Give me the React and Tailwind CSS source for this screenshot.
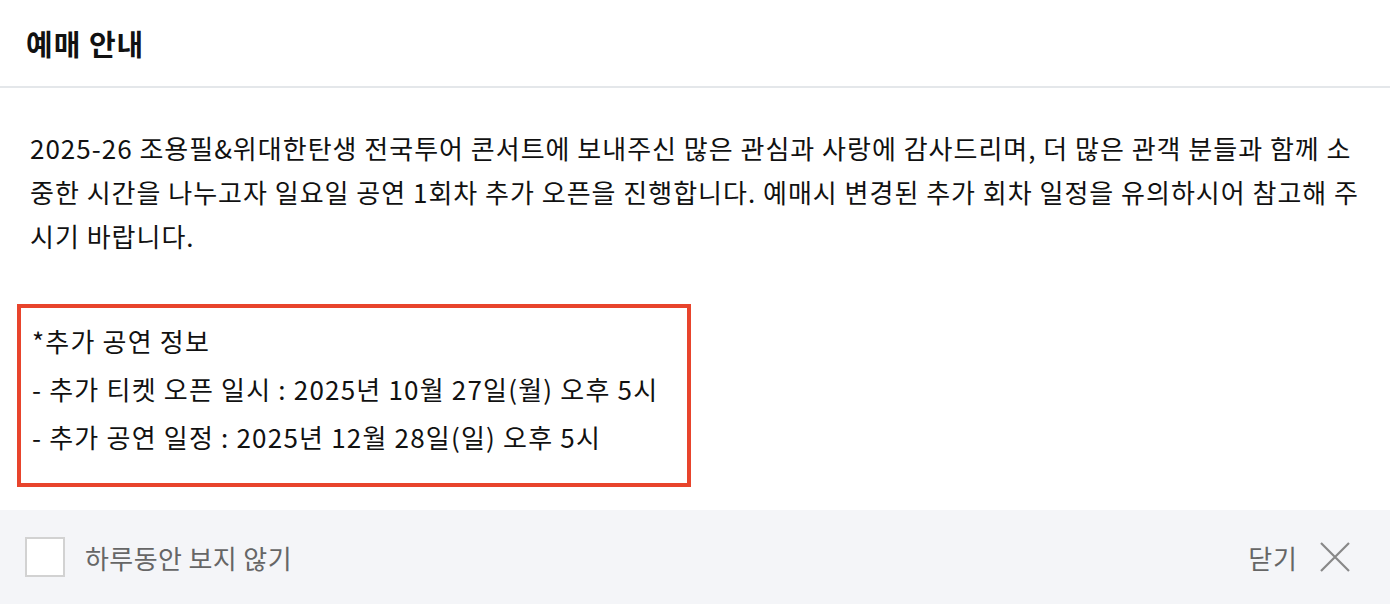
export default function App() {
  const kr = { fontFamily: '"Noto Sans CJK KR", "Noto Sans", sans-serif' };
  return (
    <div className="w-[1390px] h-[604px] bg-white flex flex-col overflow-hidden" style={kr}>
      <div className="h-[88px] flex items-center pl-[26px] border-b-2 border-[#e4e7ea] shrink-0">
        <h1 className="text-[29px] font-bold text-[#111] leading-none tracking-[1px]">예매 안내</h1>
      </div>
      <div className="flex-1 pt-[38px] pl-[30px] pr-[30px]">
        <p className="text-[26px] leading-[44px] text-[#111] tracking-[1px]">
          2025-26 조용필&amp;위대한탄생 전국투어 콘서트에 보내주신 많은 관심과 사랑에 감사드리며, 더 많은 관객 분들과 함께 소중한 시간을 나누고자 일요일 공연 1회차 추가 오픈을 진행합니다. 예매시 변경된 추가 회차 일정을 유의하시어 참고해 주시기 바랍니다.
        </p>
      </div>
      <div className="pl-[17px] mt-[44px]">
        <div className="w-[674px] border-4 border-[#e8442c] pt-[9px] pb-[22px] pl-[11px] text-[26px] leading-[48px] text-[#111] tracking-[1.2px]">
          <div>*추가 공연 정보</div>
          <div>- 추가 티켓 오픈 일시 : 2025년 10월 27일(월) 오후 5시</div>
          <div>- 추가 공연 일정 : 2025년 12월 28일(일) 오후 5시</div>
        </div>
      </div>
      <div className="mt-[23px] h-[94px] bg-[#f4f5f8] flex items-center justify-between pl-[25px] pr-[40px] shrink-0">
        <div className="flex items-center gap-[20px]">
          <div className="w-[40px] h-[40px] bg-white border-2 border-[#d2d2d2]" />
          <span className="text-[26px] text-[#666] tracking-[0.4px]">하루동안 보지 않기</span>
        </div>
        <div className="flex items-center gap-[22px]">
          <span className="text-[26px] text-[#666] tracking-[1px]">닫기</span>
          <svg width="30" height="30" viewBox="0 0 30 30" fill="none" stroke="#888" strokeWidth="2.2">
            <path d="M1 1L29 29M29 1L1 29" />
          </svg>
        </div>
      </div>
    </div>
  );
}
